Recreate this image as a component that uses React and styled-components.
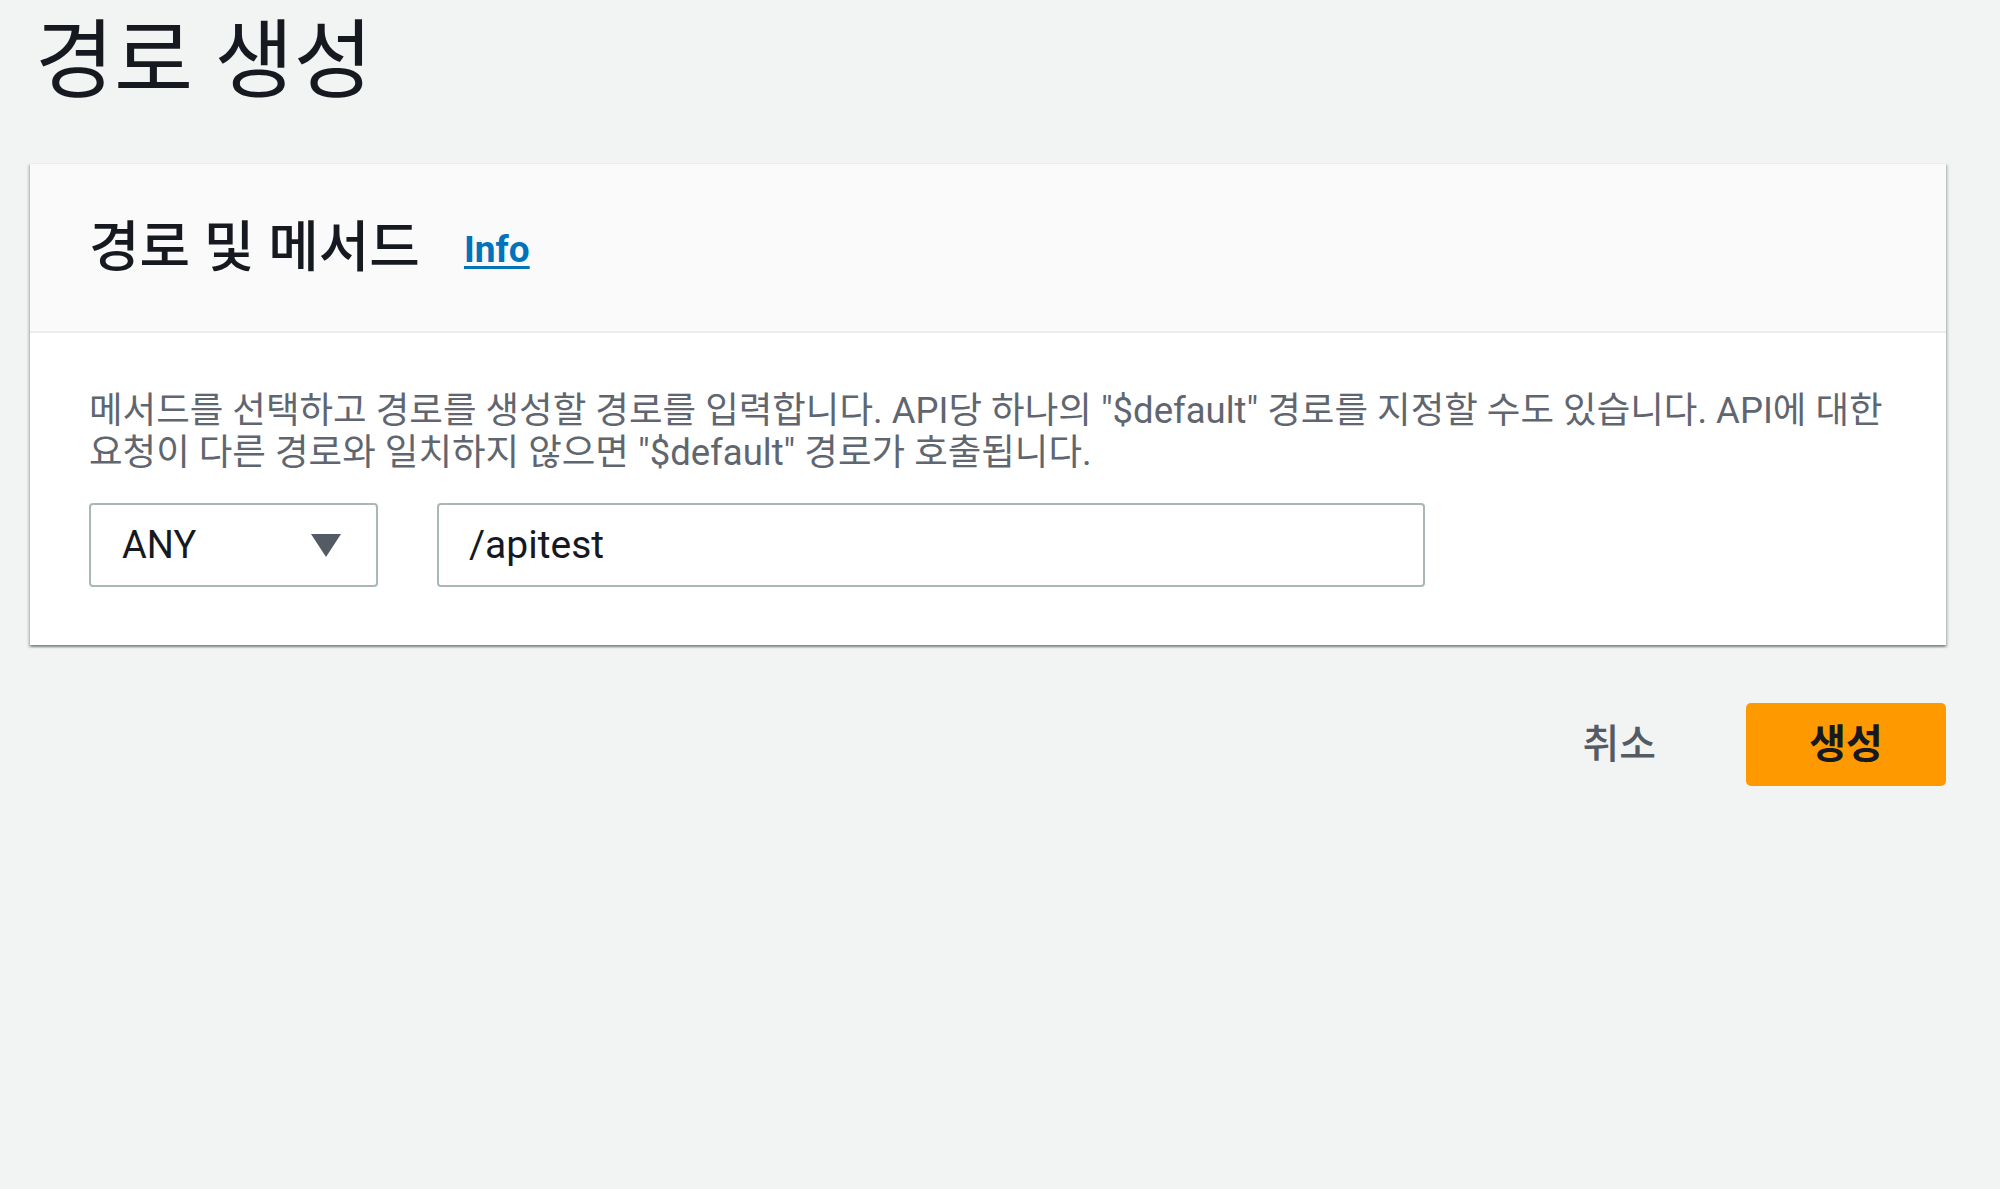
import React from 'react';
import styled, { createGlobalStyle } from 'styled-components';

const GlobalStyle = createGlobalStyle`
  html, body {
    margin: 0;
    padding: 0;
    background: #f2f3f3;
  }
  body {
    font-family: Roboto, "Noto Sans CJK KR", sans-serif;
    color: #16191f;
  }
`;

const S = {
  Page: styled.div`
    min-height: 1189px;
    box-sizing: border-box;
    padding: 12px 54px 0 30px;
  `,

  Title: styled.h1`
    margin: 0 0 51px 5px;
    font-size: 86px;
    line-height: 100px;
    font-weight: 400;
    color: #16191f;
  `,

  Card: styled.section`
    background: #ffffff;
    border-top: 1px solid #eaeded;
    box-shadow: 0 2px 2px 0 rgba(0, 28, 36, 0.3),
      2px 2px 2px 0 rgba(0, 28, 36, 0.15),
      -2px 2px 2px 0 rgba(0, 28, 36, 0.15);
  `,

  CardHeader: styled.header`
    height: 169px;
    box-sizing: border-box;
    padding: 0 59px;
    display: flex;
    align-items: center;
    background: #fafafa;
    border-bottom: 2px solid #eaeded;
  `,

  HeaderLine: styled.div`
    display: flex;
    align-items: center;
    gap: 44px;
  `,

  CardTitle: styled.h2`
    margin: -12px 0 0;
    font-size: 55px;
    font-weight: 500;
    color: #16191f;
  `,

  InfoLink: styled.a`
    margin-top: 4px;
    font-size: 37px;
    font-weight: 700;
    color: #0073bb;
    text-decoration: underline;
    text-underline-offset: 4px;
    text-decoration-thickness: 3px;
    cursor: pointer;
  `,

  CardBody: styled.div`
    padding: 57px 59px 58px;
  `,

  Description: styled.p`
    margin: 0 0 29px;
    font-size: 36.5px;
    line-height: 42px;
    color: #5f6670;
    white-space: nowrap;
  `,

  Controls: styled.div`
    display: flex;
    gap: 59px;
  `,

  Select: styled.div`
    width: 289px;
    height: 84px;
    box-sizing: border-box;
    padding: 0 34px 0 31px;
    display: flex;
    align-items: center;
    justify-content: space-between;
    border: 2px solid #aab7b8;
    border-radius: 4px;
    background: #fff;
    font-size: 38px;
    color: #16191f;
  `,

  Input: styled.div`
    width: 988px;
    height: 84px;
    box-sizing: border-box;
    padding: 0 30px;
    display: flex;
    align-items: center;
    border: 2px solid #aab7b8;
    border-radius: 4px;
    background: #fff;
    font-size: 39px;
    color: #16191f;
  `,

  Actions: styled.div`
    margin-top: 58px;
    display: flex;
    justify-content: flex-end;
    align-items: center;
    gap: 50px;
  `,

  Button: styled.button`
    height: 83px;
    min-width: ${(p) => (p.primary ? '200px' : 'auto')};
    padding: 0 40px 8px;
    box-sizing: border-box;
    border: none;
    border-radius: 5px;
    background: ${(p) => (p.primary ? '#ff9900' : 'transparent')};
    color: ${(p) => (p.primary ? '#16191f' : '#545b64')};
    font-family: Roboto, "Noto Sans CJK KR", sans-serif;
    font-size: 40px;
    font-weight: ${(p) => (p.primary ? 700 : 500)};
    cursor: pointer;
  `,
};

function Caret() {
  return (
    <svg width="32" height="26" viewBox="0 0 32 26">
      <polygon points="1,2 31,2 16,25" fill="#545b64" />
    </svg>
  );
}

export default function App() {
  return (
    <>
      <GlobalStyle />
      <S.Page>
        <S.Title>경로 생성</S.Title>
        <S.Card>
          <S.CardHeader>
            <S.HeaderLine>
              <S.CardTitle>경로 및 메서드</S.CardTitle>
              <S.InfoLink>Info</S.InfoLink>
            </S.HeaderLine>
          </S.CardHeader>
          <S.CardBody>
            <S.Description>
              메서드를 선택하고 경로를 생성할 경로를 입력합니다. API당 하나의 "$default" 경로를 지정할 수도 있습니다. API에 대한
              <br />
              요청이 다른 경로와 일치하지 않으면 "$default" 경로가 호출됩니다.
            </S.Description>
            <S.Controls>
              <S.Select>
                <span>ANY</span>
                <Caret />
              </S.Select>
              <S.Input>/apitest</S.Input>
            </S.Controls>
          </S.CardBody>
        </S.Card>
        <S.Actions>
          <S.Button>취소</S.Button>
          <S.Button primary>생성</S.Button>
        </S.Actions>
      </S.Page>
    </>
  );
}
